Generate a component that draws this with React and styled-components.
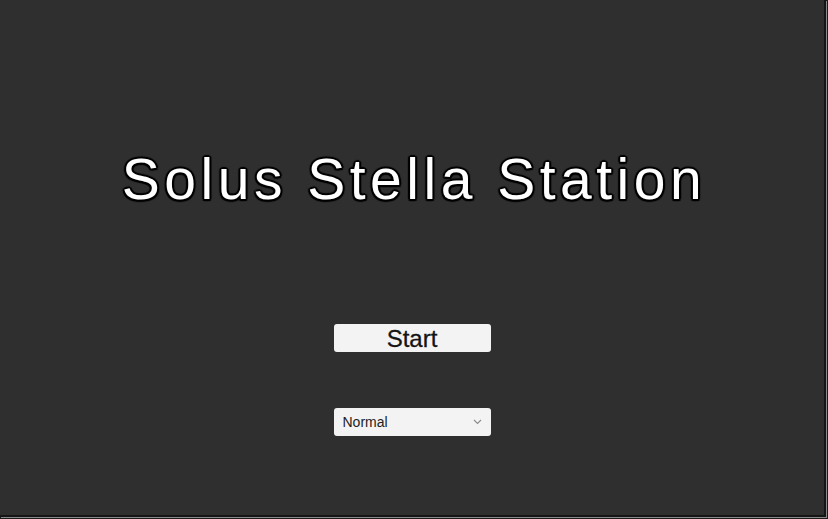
import React from "react";
import styled, { createGlobalStyle } from "styled-components";

const GlobalStyle = createGlobalStyle`
  html, body {
    margin: 0;
    padding: 0;
    height: 100%;
    background: #2f2f2f;
    overflow: hidden;
  }
  #root {
    height: 100%;
  }
`;

function ChevronDown() {
  return (
    <svg width="9" height="6" viewBox="0 0 9 6" fill="none">
      <path d="M1 1l3.5 3.5L8 1" stroke="#8a8a8a" strokeWidth="1.1" />
    </svg>
  );
}

function App() {
  return (
    <>
      <GlobalStyle />
      <Window>
        <Screen>
          <Title>Solus Stella Station</Title>
          <StartButton>Start</StartButton>
          <Dropdown>
            <span>Normal</span>
            <ChevronDown />
          </Dropdown>
        </Screen>
      </Window>
    </>
  );
}

export default App;

const Window = styled.div`
  height: 100%;
  box-sizing: border-box;
  padding: 0 1px 1px 0;
  background: #1c1c1c;
  display: flex;
`;

const Screen = styled.div`
  flex: 1;
  box-sizing: border-box;
  background: #2f2f2f;
  border-right: 2px solid #151515;
  border-bottom: 2px solid #151515;
  box-shadow: 1px 1px 0 #8a8a8a;
  margin: 0 1px 1px 0;

  display: flex;
  flex-direction: column;
  align-items: center;
  padding-top: 151px;
  font-family: "Liberation Sans", Arial, sans-serif;
`;

const Title = styled.h1`
  margin: 0;
  padding-left: 4px;
  font-size: 57px;
  font-weight: normal;
  line-height: 1;
  letter-spacing: 4.5px;
  color: #ffffff;
  white-space: nowrap;
  text-shadow:
    -2px 0 1px #000,
    2px 0 1px #000,
    0 -2px 1px #000,
    0 2px 1px #000,
    -1.5px -1.5px 1px #000,
    1.5px -1.5px 1px #000,
    -1.5px 1.5px 1px #000,
    1.5px 1.5px 1px #000;
`;

const StartButton = styled.div`
  margin-top: 116px;
  width: 157px;
  height: 28px;
  box-sizing: border-box;
  border-radius: 3px;
  background: #f3f3f3;
  color: #141414;
  font-size: 24px;
  line-height: 29px;
  text-align: center;
  -webkit-text-stroke: 0.3px #141414;
  cursor: pointer;
`;

const Dropdown = styled.div`
  margin-top: 56px;
  width: 157px;
  height: 28px;
  box-sizing: border-box;
  border-radius: 3px;
  background: #f3f3f3;
  padding: 0 9px 0 9px;
  display: flex;
  align-items: center;
  justify-content: space-between;
  color: #222;
  font-size: 14px;
  cursor: pointer;
`;
